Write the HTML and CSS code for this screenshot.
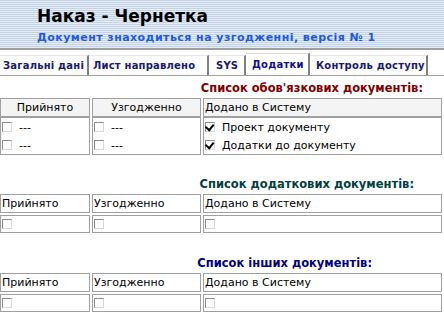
FILE: index.html
```html
<!DOCTYPE html>
<html lang="uk">
<head>
<meta charset="utf-8">
<link rel="stylesheet" href="styles.css">
</head>
<body>
<div class="header">
  <div class="title">Наказ - Чернетка</div>
  <div class="subtitle">Документ знаходиться на узгодженні, версія № 1</div>
</div>
<div class="tabs">
  <div class="tab t-general">Загальні дані</div>
  <div class="tab t-letter">Лист направлено</div>
  <div class="tab t-sys">SYS</div>
  <div class="tab t-attach active">Додатки</div>
  <div class="tab t-access">Контроль доступу</div>
</div>
<div class="section first">
  <div class="caption red">Список обов'язкових документів:</div>
  <table class="docs shaded">
    <tr class="head"><th class="c1 center">Прийнято</th><th class="c2 center">Узгодженно</th><th class="c3">Додано в Систему</th></tr>
    <tr class="row-first"><td><span class="cb"></span>---</td><td><span class="cb"></span>---</td><td><span class="cb checked"></span>Проект документу</td></tr>
    <tr class="row-last"><td><span class="cb"></span>---</td><td><span class="cb"></span>---</td><td><span class="cb checked"></span>Додатки до документу</td></tr>
  </table>
</div>
<div class="section">
  <div class="caption green">Список додаткових документів:</div>
  <table class="docs">
    <tr class="head"><th class="c1">Прийнято</th><th class="c2">Узгодженно</th><th class="c3">Додано в Систему</th></tr>
    <tr><td><span class="cb"></span></td><td><span class="cb"></span></td><td><span class="cb"></span></td></tr>
  </table>
</div>
<div class="section">
  <div class="caption navy">Список інших документів:</div>
  <table class="docs">
    <tr class="head"><th class="c1">Прийнято</th><th class="c2">Узгодженно</th><th class="c3">Додано в Систему</th></tr>
    <tr><td><span class="cb"></span></td><td><span class="cb"></span></td><td><span class="cb"></span></td></tr>
  </table>
</div>
</body>
</html>
```
FILE: styles.css
```css
body {
  margin: 0;
  font-family: "DejaVu Sans", Verdana, sans-serif;
  background: #fff;
  width: 444px;
  overflow: hidden;
}
.header {
  height: 50px;
  padding-left: 37px;
  box-sizing: border-box;
  background: repeating-linear-gradient(to bottom, #c4d4e6 0, #c4d4e6 1px, #e4ecf5 1px, #e4ecf5 2px);
  border-bottom: 2px solid #a0a0a0;
}
.title {
  font-size: 17px;
  font-weight: bold;
  color: #000;
  padding-top: 4px;
  line-height: 24px;
}
.subtitle {
  font-size: 11px;
  font-weight: bold;
  color: #1e5ae0;
  line-height: 16px;
  padding-top: 2px;
  letter-spacing: 0.45px;
}
.tabs {
  display: flex;
  flex-wrap: nowrap;
  margin-top: 3px;
  border-bottom: 1px solid #a0a0a0;
  height: 22px;
  align-items: flex-end;
}
.tab {
  flex: none;
  box-sizing: border-box;
  white-space: nowrap;
  font-size: 10px;
  font-weight: bold;
  letter-spacing: 0.2px;
  color: #1a1a6e;
  height: 20px;
  line-height: 20px;
  padding-left: 5px;
  border-right: 2px solid #808080;
  border-top: 1px solid #e6e6e6;
  background: #fcfcfc;
}
.t-general { width: 89px; padding-left: 3px; }
.t-letter { width: 120px; padding-left: 4px; }
.t-sys { width: 37px; padding-left: 7px; }
.t-attach { width: 64px; padding-left: 6px; }
.t-access { width: 118px; padding-left: 6px; }
.tab.active {
  height: 22px;
  line-height: 22px;
  background: #fff;
  color: #10108a;
  border-top-color: #dcdcdc;
}
.section {
  margin-top: 4px;
}
.section.first {
  margin-top: 5px;
}
.caption {
  font-size: 11.5px;
  font-weight: bold;
  line-height: 14px;
  text-align: right;
  padding-right: 21px;
}
.red { color: #800000; }
.green { color: #004040; padding-right: 30px; margin-top: 22px; }
.navy { color: #000080; padding-right: 72px; margin-top: 21px; }
.docs {
  width: 446px;
  border-collapse: separate;
  border-spacing: 2px 2px;
  margin-left: -2px;
  margin-top: 1px;
  font-size: 11px;
}
.docs th, .docs td {
  border: 1px solid #a0a0a0;
  font-weight: normal;
  text-align: left;
  height: 16px;
  padding: 0 1px;
  color: #000;
  white-space: nowrap;
  vertical-align: middle;
}
.docs th { height: 17px; }
.docs th.center { text-align: center; }
.docs .c1 { width: 86px; }
.docs .c2 { width: 105px; }
.shaded {
  border-spacing: 2px 0;
  margin-top: 3px;
}
.shaded .head th {
  background: #f4f4f4;
  height: 17px;
}
.shaded td {
  border-top: none;
  border-bottom: none;
  height: 18px;
}
.shaded .row-first td {
  border-top: 1px solid #a0a0a0;
}
.shaded .row-last td {
  border-bottom: 1px solid #a0a0a0;
}
.cb {
  display: inline-block;
  width: 10px;
  height: 10px;
  border: 1px solid #8c8c8c;
  border-right-color: #d8d8d8;
  border-bottom-color: #d8d8d8;
  background: #fff;
  vertical-align: -1px;
  margin-right: 7px;
  position: relative;
  box-sizing: border-box;
}
.cb.checked::after {
  content: "";
  position: absolute;
  left: 1px;
  top: 0px;
  width: 4px;
  height: 6px;
  border-right: 2px solid #000;
  border-bottom: 2px solid #000;
  transform: rotate(40deg);
  transform-origin: 60% 40%;
}
```
